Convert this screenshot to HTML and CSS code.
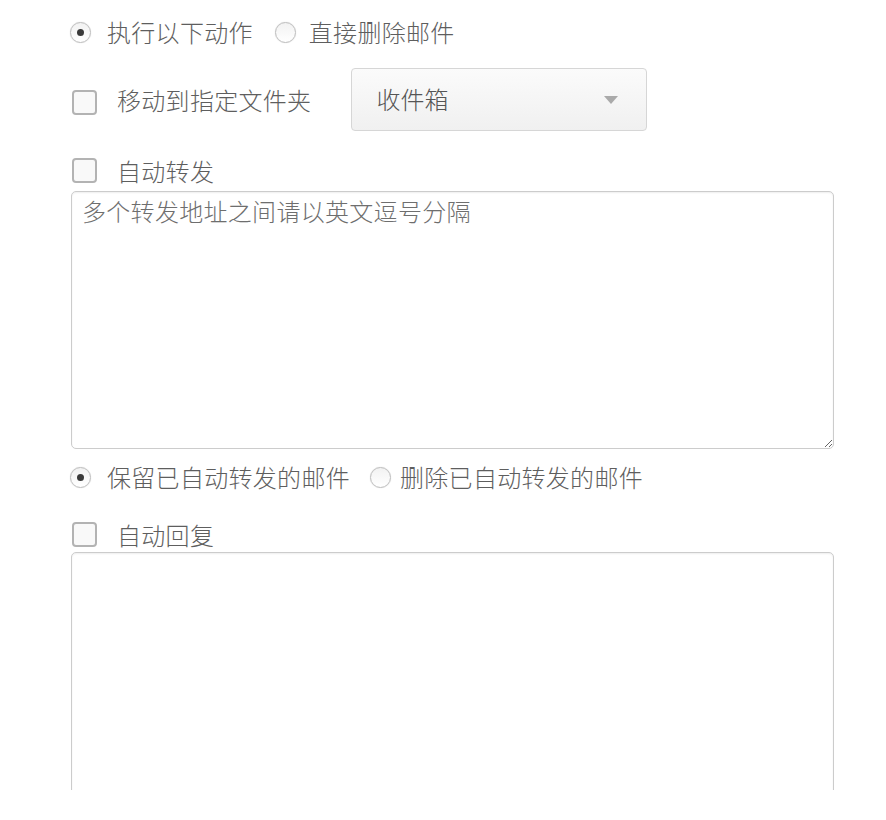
FILE: index.html
```html
<!DOCTYPE html>
<html lang="zh-CN">
<head>
<meta charset="utf-8">
<title>邮件规则动作</title>
<link rel="stylesheet" href="styles.css">
</head>
<body>
<div class="panel">
  <div class="row row-action">
    <label class="opt"><span class="radio checked"></span><span class="lbl">执行以下动作</span></label>
    <label class="opt opt-2"><span class="radio"></span><span class="lbl">直接删除邮件</span></label>
  </div>

  <div class="row row-move">
    <label class="opt"><span class="check"></span><span class="lbl lbl-check">移动到指定文件夹</span></label>
    <div class="select"><span class="select-text">收件箱</span><span class="caret"></span></div>
  </div>

  <div class="row row-fwd">
    <label class="opt"><span class="check"></span><span class="lbl lbl-check">自动转发</span></label>
  </div>
  <textarea class="area area-fwd" placeholder="多个转发地址之间请以英文逗号分隔"></textarea>

  <div class="row row-keep">
    <label class="opt"><span class="radio checked"></span><span class="lbl">保留已自动转发的邮件</span></label>
    <label class="opt opt-3"><span class="radio"></span><span class="lbl">删除已自动转发的邮件</span></label>
  </div>

  <div class="row row-reply">
    <label class="opt"><span class="check"></span><span class="lbl lbl-check">自动回复</span></label>
  </div>
  <textarea class="area area-reply"></textarea>
</div>
</body>
</html>
```

FILE: styles.css
```css
html, body {
  margin: 0;
  padding: 0;
  background: #ffffff;
}

body {
  font-family: "Noto Sans CJK SC", "Noto Sans", "Liberation Sans", sans-serif;
  font-size: 24px;
  font-weight: 300;
  color: #5e5e5e;
}

.panel {
  height: 790px;
  overflow: hidden;
  padding-left: 70px;
  box-sizing: border-box;
  display: flex;
  flex-direction: column;
  align-items: flex-start;
}

.row {
  display: flex;
  align-items: center;
}

.opt {
  display: flex;
  align-items: center;
}

.lbl {
  line-height: 24px;
  white-space: nowrap;
  letter-spacing: 0.3px;
}

.radio {
  position: relative;
  width: 21px;
  height: 21px;
  margin-right: 16px;
  border: 1px solid #bdbdbd;
  border-radius: 50%;
  box-sizing: border-box;
  background: linear-gradient(#f2f2f2, #ffffff);
  box-shadow: 0 0 1px rgba(0, 0, 0, 0.2);
  flex: none;
}

.radio.checked::after {
  content: "";
  position: absolute;
  left: 50%;
  top: 50%;
  width: 7px;
  height: 7px;
  margin: -3.5px 0 0 -3.5px;
  border-radius: 50%;
  background: #3a3a3a;
}

.check {
  width: 25px;
  height: 25px;
  margin-left: 2px;
  margin-right: 20px;
  border: 2px solid #b3b3b3;
  border-radius: 4px;
  box-sizing: border-box;
  background: #f9f9f9;
  flex: none;
}

.row-action {
  margin-top: 20px;
  height: 24px;
}

.opt-2 {
  margin-left: 22px;
}

.opt-2 .radio {
  margin-right: 13px;
}

.row-move {
  margin-top: 24px;
  height: 63px;
}

.row-move .check {
  margin-top: 5px;
}

.select {
  width: 296px;
  height: 63px;
  margin-left: 40px;
  box-sizing: border-box;
  border: 1px solid #d6d6d6;
  border-radius: 4px;
  background: linear-gradient(#fbfbfb, #f0f0f0);
  display: flex;
  align-items: center;
  justify-content: space-between;
  padding: 0 28px 0 24px;
  color: #555555;
}

.select-text {
  line-height: 24px;
  margin-top: -2px;
}

.caret {
  width: 0;
  height: 0;
  border-left: 7px solid transparent;
  border-right: 7px solid transparent;
  border-top: 8px solid #aaaaaa;
}

.row-fwd {
  margin-top: 27px;
  height: 26px;
}

.area {
  display: block;
  width: 763px;
  margin: 0 0 0 1px;
  box-sizing: border-box;
  border: 1px solid #cccccc;
  border-radius: 5px;
  box-shadow: inset 0 1px 2px rgba(0, 0, 0, 0.07);
  background: #ffffff;
  font-family: "Noto Sans CJK SC", "Noto Sans", "Liberation Sans", sans-serif;
  font-size: 24px;
  font-weight: 300;
  line-height: 30px;
  letter-spacing: 0.3px;
  color: #555555;
  padding: 4px 10px;
  outline: none;
}

.area::placeholder {
  color: #6e6e6e;
  opacity: 1;
}

.area-fwd {
  margin-top: 8px;
  height: 258px;
  flex: none;
}

.row-keep {
  margin-top: 16px;
  height: 24px;
}

.row-keep .radio {
  margin-right: 16px;
}

.opt-3 {
  margin-left: 20px;
}

.opt-3 .radio {
  margin-right: 9px;
}

.row-reply {
  margin-top: 33px;
  height: 26px;
}

.area-reply {
  margin-top: 5px;
  height: 300px;
  flex: none;
  resize: none;
}
```
